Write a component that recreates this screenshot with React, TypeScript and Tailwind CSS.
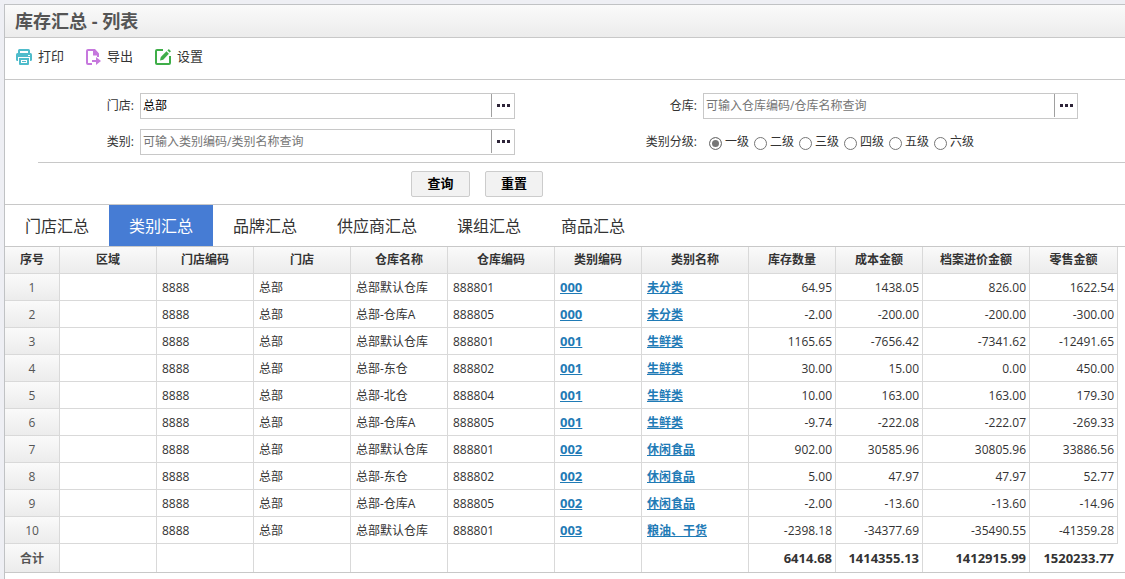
import type { ReactNode } from "react";
import { clsx } from "clsx";

type Row = {
  store: string;
  storeName: string;
  warehouse: string;
  warehouseCode: string;
  category: string;
  categoryName: string;
  amounts: string[];
};

const row = (
  warehouse: string,
  warehouseCode: string,
  category: string,
  categoryName: string,
  ...amounts: string[]
): Row => ({
  store: "8888",
  storeName: "总部",
  warehouse,
  warehouseCode,
  category,
  categoryName,
  amounts,
});

const rows: Row[] = [
  row("总部默认仓库", "888801", "000", "未分类", "64.95", "1438.05", "826.00", "1622.54"),
  row("总部-仓库A", "888805", "000", "未分类", "-2.00", "-200.00", "-200.00", "-300.00"),
  row("总部默认仓库", "888801", "001", "生鲜类", "1165.65", "-7656.42", "-7341.62", "-12491.65"),
  row("总部-东仓", "888802", "001", "生鲜类", "30.00", "15.00", "0.00", "450.00"),
  row("总部-北仓", "888804", "001", "生鲜类", "10.00", "163.00", "163.00", "179.30"),
  row("总部-仓库A", "888805", "001", "生鲜类", "-9.74", "-222.08", "-222.07", "-269.33"),
  row("总部默认仓库", "888801", "002", "休闲食品", "902.00", "30585.96", "30805.96", "33886.56"),
  row("总部-东仓", "888802", "002", "休闲食品", "5.00", "47.97", "47.97", "52.77"),
  row("总部-仓库A", "888805", "002", "休闲食品", "-2.00", "-13.60", "-13.60", "-14.96"),
  row("总部默认仓库", "888801", "003", "粮油、干货", "-2398.18", "-34377.69", "-35490.55", "-41359.28"),
];

const totals = ["6414.68", "1414355.13", "1412915.99", "1520233.77"];

const columns = [
  { title: "序号", width: "w-[55px]" },
  { title: "区域", width: "w-[97px]" },
  { title: "门店编码", width: "w-[97px]" },
  { title: "门店", width: "w-[97px]" },
  { title: "仓库名称", width: "w-[97px]" },
  { title: "仓库编码", width: "w-[107px]" },
  { title: "类别编码", width: "w-[87px]" },
  { title: "类别名称", width: "w-[107px]" },
  { title: "库存数量", width: "w-[87px]" },
  { title: "成本金额", width: "w-[87px]" },
  { title: "档案进价金额", width: "w-[107px]" },
  { title: "零售金额", width: "w-[88px]" },
];

const tabs = ["门店汇总", "类别汇总", "品牌汇总", "供应商汇总", "课组汇总", "商品汇总"];
const levels = ["一级", "二级", "三级", "四级", "五级", "六级"];

const PrintIcon = () => (
  <svg width="16" height="16" viewBox="0 0 16 16" fill="none" aria-hidden="true">
    <path d="M3 5V1.500Q3 1 3.500 1h9q.5 0 .5.5V5" stroke="#4fbccb" strokeWidth="2" />
    <path d="M1.500 4h13Q16 4 16 5.500v5Q16 12 14.500 12H1.500Q0 12 0 10.500v-5Q0 4 1.500 4Z" fill="#4fbccb" />
    <rect x="12" y="6" width="2" height="1" fill="#fff" />
    <path d="M2 8h12v5H2Z" fill="#fff" />
    <path d="M3 9h10v6q0 1-1 1H4q-1 0-1-1Z" fill="#4fbccb" />
    <path d="M5 11h6v3H5Z" fill="#fff" />
    <path d="M6 12h4v1H6Z" fill="#4fbccb" />
  </svg>
);

const ExportIcon = () => (
  <svg width="16" height="16" viewBox="0 0 16 16" fill="none" aria-hidden="true">
    <path d="M7 15H3q-1 0-1-1V2q0-1 1-1h6l4 4.500V8" stroke="#c678dd" strokeWidth="2" />
    <path d="M8 0h2L14 4.500V6.500H8Z" fill="#c678dd" />
    <path d="M7 12h7" stroke="#c678dd" strokeWidth="2" />
    <path d="M11 8l5 4-5 4Z" fill="#c678dd" />
  </svg>
);

const SettingIcon = () => (
  <svg width="17" height="16" viewBox="0 0 17 16" fill="none" aria-hidden="true">
    <path d="M9 1H3q-1 0-1 1v12q0 1 1 1h12q1 0 1-1V7" stroke="#3fae49" strokeWidth="2" />
    <path d="M6 11.500l.8-3.500L12.500 2.300l2.400 2.400L9.200 10.700Z" fill="#3fae49" />
    <path d="M13.400 1.400L14.800 0l2.200 2.200-1.400 1.400Z" fill="#3fae49" />
  </svg>
);

const tools = [
  { label: "打印", icon: <PrintIcon /> },
  { label: "导出", icon: <ExportIcon /> },
  { label: "设置", icon: <SettingIcon /> },
];

const Field = ({ label, htmlFor, children }: { label: string; htmlFor?: string; children: ReactNode }) => (
  <div className="flex h-[26px] pr-[47px]">
    <label htmlFor={htmlFor} className="w-[135px] shrink-0 pr-[6px] text-right leading-[26px]">
      {label}:
    </label>
    {children}
  </div>
);

const LookupInput = ({
  id,
  label,
  value,
  placeholder,
}: {
  id: string;
  label: string;
  value?: string;
  placeholder?: string;
}) => (
  <div className="flex min-w-0 flex-1 border border-[#c8c8c8] bg-white">
    <input
      id={id}
      type="text"
      defaultValue={value}
      placeholder={placeholder}
      className="min-w-0 flex-1 px-[2px] text-black outline-none placeholder:text-[#757575]"
    />
    <button
      type="button"
      aria-label={`选择${label}`}
      className="mb-px flex w-[23px] items-center justify-center border-l border-[#a0a0a0]"
    >
      <svg width="13" height="3" viewBox="0 0 13 3" fill="#2d2438">
        <rect width="3" height="3" />
        <rect x="5" width="3" height="3" />
        <rect x="10" width="3" height="3" />
      </svg>
    </button>
  </div>
);

const cell = "h-[27px] border-r border-b border-[#d9d9d9] p-0";
const textCell = "pt-[2px] pl-[5px]";
const shade = "bg-linear-to-b from-[#fafafa] to-[#ececec]";

const App = () => {
  return (
    <div className="min-h-screen bg-[#eeeff4] pt-1 pl-1 font-['Open_Sans','Noto_Sans_CJK_SC',sans-serif] text-xs text-[#333]">
      <main className="min-h-[575px] border-t border-l border-[#c0c2c4] bg-white">
        <header className="flex h-[33px] items-center border-b border-[#c8c8c8] bg-linear-to-b from-[#fafafa] to-[#ececec] px-[10px]">
          <h1 className="text-lg leading-8 font-bold text-[#555]">库存汇总 - 列表</h1>
        </header>

        <div className="flex h-[42px] gap-[21px] border-b border-[#c8c8c8] px-[11px] pb-1">
          {tools.map((tool) => (
            <button key={tool.label} type="button" className="flex items-center gap-[6px] text-[13px]">
              {tool.icon}
              {tool.label}
            </button>
          ))}
        </div>

        <form onSubmit={(e) => e.preventDefault()}>
          <div className="grid grid-cols-2 gap-x-[6px] gap-y-[10px] pt-[13px] pb-[7px]">
            <Field label="门店" htmlFor="store">
              <LookupInput id="store" label="门店" value="总部" />
            </Field>
            <Field label="仓库" htmlFor="warehouse">
              <LookupInput id="warehouse" label="仓库" placeholder="可输入仓库编码/仓库名称查询" />
            </Field>
            <Field label="类别" htmlFor="category">
              <LookupInput id="category" label="类别" placeholder="可输入类别编码/类别名称查询" />
            </Field>
            <Field label="类别分级">
              <div className="flex gap-[5px] pl-[6px]" role="radiogroup" aria-label="类别分级">
                {levels.map((level, i) => (
                  <label key={level} className="flex h-[26px] items-center gap-[3px] whitespace-nowrap">
                    <input
                      type="radio"
                      name="level"
                      defaultChecked={i === 0}
                      className="mt-[3px] size-[13px] appearance-none rounded-full border border-[#767676] bg-white checked:bg-[#767676] checked:shadow-[inset_0_0_0_2px_#fff]"
                    />
                    {level}
                  </label>
                ))}
              </div>
            </Field>
          </div>

          <div className="ml-[33px] border-t border-[#c8c8c8]" />

          <div className="flex gap-[15px] pt-2 pb-[7px] pl-[406px]">
            <button type="submit" className="h-[26px] w-[59px] rounded-xs border border-[#ccc] bg-[#f2f2f2] text-[13px] font-bold text-black">
              查询
            </button>
            <button type="reset" className="h-[26px] w-[58px] rounded-xs border border-[#ccc] bg-[#f2f2f2] text-[13px] font-bold text-black">
              重置
            </button>
          </div>
        </form>

        <nav className="flex h-[43px] border-y border-[#c8c8c8]" role="tablist">
          {tabs.map((tab, i) => (
            <button
              key={tab}
              type="button"
              role="tab"
              aria-selected={i === 1}
              className={clsx("px-5 text-base", i === 1 && "bg-[#467cd4] text-white")}
            >
              {tab}
            </button>
          ))}
        </nav>

        <div className="border-b border-[#c8c8c8] pr-[7px]">
          <table className="w-full table-fixed border-separate border-spacing-0">
            <thead>
              <tr>
                {columns.map((col) => (
                  <th key={col.title} className={clsx(cell, shade, col.width, "text-center font-bold")}>
                    {col.title}
                  </th>
                ))}
              </tr>
            </thead>
            <tbody>
              {rows.map((item, i) => (
                <tr key={i}>
                  <td className={clsx(cell, shade, "pt-[2px] text-center text-[#555]")}>{i + 1}</td>
                  <td className={cell} />
                  <td className={clsx(cell, textCell)}>{item.store}</td>
                  <td className={clsx(cell, textCell)}>{item.storeName}</td>
                  <td className={clsx(cell, textCell)}>{item.warehouse}</td>
                  <td className={clsx(cell, textCell)}>{item.warehouseCode}</td>
                  <td className={clsx(cell, "pl-[5px]")}>
                    <a href="#" className="text-[13px] leading-4 font-bold text-[#1f7bb6] underline">
                      {item.category}
                    </a>
                  </td>
                  <td className={clsx(cell, textCell)}>
                    <a href="#" className="font-bold text-[#1f7bb6] underline">
                      {item.categoryName}
                    </a>
                  </td>
                  {item.amounts.map((amount, j) => (
                    <td key={j} className={clsx(cell, "pt-[2px] pr-[3px] text-right")}>
                      {amount}
                    </td>
                  ))}
                </tr>
              ))}
            </tbody>
            <tfoot>
              <tr>
                <th className={clsx(shade, "h-[28px] border-r border-[#d9d9d9] p-0 pt-[2px] text-[#555]")}>合计</th>
                {columns.slice(1, 8).map((col) => (
                  <td key={col.title} className="border-r border-[#d9d9d9] p-0" />
                ))}
                {totals.map((total) => (
                  <td
                    key={total}
                    className="border-r border-[#d9d9d9] p-0 pr-[3px] text-right text-[13px] leading-4 font-bold last:border-transparent"
                  >
                    {total}
                  </td>
                ))}
              </tr>
            </tfoot>
          </table>
        </div>
      </main>
    </div>
  );
};

export default App;
